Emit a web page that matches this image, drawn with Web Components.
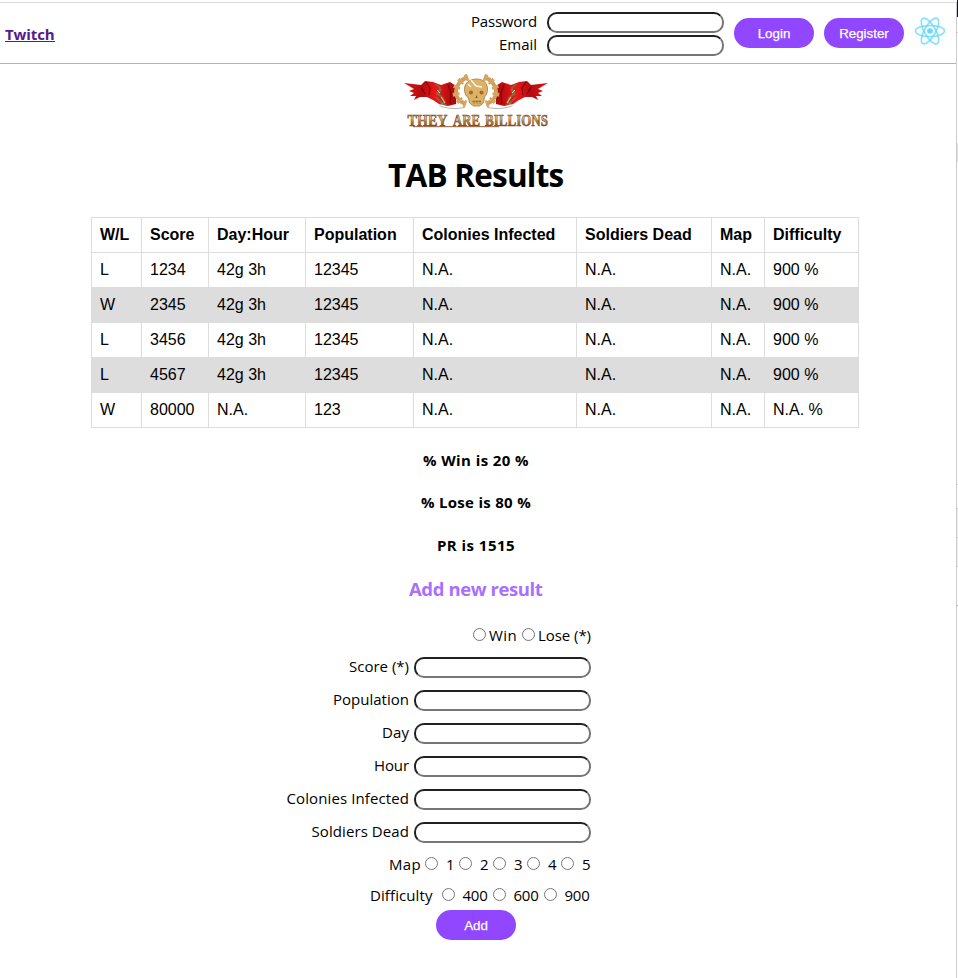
<!DOCTYPE html>
<html lang="en">
<head>
<meta charset="utf-8">
<title>TAB Results</title>
<style>
  html, body { margin: 0; height: 978px; overflow: hidden; background: #fff; }
  body { font-family: "Open Sans", "Noto Sans", sans-serif; font-size: 15px; color: #000; }
</style>
</head>
<body>
<tab-app></tab-app>
<script>
/* Base class: renders the static markup of each element into an open shadow root. */
class Base extends HTMLElement {
  connectedCallback() {
    if (this.shadowRoot) return;
    const t = document.createElement('template');
    t.innerHTML = this.view();
    this.attachShadow({ mode: 'open' }).append(t.content.cloneNode(true));
    this.ready();
  }
  ready() {}
}

/* Text spaced evenly to a given width. */
customElements.define('fit-text', class extends Base {
  view() {
    return `<style>:host{display:inline-block;white-space:pre;flex:none;line-height:20px}span{display:inline-block}</style><span>${this.getAttribute('text')}</span>`;
  }
  ready() {
    const s = this.shadowRoot.querySelector('span'), w = +this.getAttribute('width');
    const n = this.getAttribute('text').length;
    this.style.width = w + 'px';
    s.style.letterSpacing = ((w - s.getBoundingClientRect().width) / n) + 'px';
  }
});

customElements.define('round-input', class extends Base {
  view() {
    return `<style>:host{display:block;flex:none;width:177px;height:21px}
    input{display:block;box-sizing:border-box;width:177px;height:21px;margin:0;padding:1px 2px;border:2px solid;border-color:#212121 #767676 #767676 #212121;border-radius:10px;background:#fff;outline:0}</style><input type="text">`;
  }
});

customElements.define('pill-button', class extends Base {
  view() {
    return `<style>:host{display:block;flex:none}
    button{display:block;width:80px;height:30px;border:0;border-radius:15px;padding:0;background:#9147ff;color:#fff;font:13.333px "Liberation Sans",Arial,sans-serif;-webkit-text-stroke:.25px #fff}</style><button><slot></slot></button>`;
  }
});

customElements.define('radio-option', class extends Base {
  view() {
    return `<style>:host{display:flex;flex:none;align-items:center;gap:var(--gap,7px)}
    input{width:13px;height:13px;margin:0;flex:none;transform:translateY(-1px)}</style>
    <input type="radio"><fit-text text="${this.getAttribute('text')}" width="${this.getAttribute('width')}"></fit-text>`;
  }
});

customElements.define('react-mark', class extends Base {
  view() {
    return `<style>:host{display:block;width:32px;height:30px;flex:none}svg{display:block}</style>
    <svg width="32" height="30" viewBox="-16 -15 32 30" fill="none" stroke="#61dafb" stroke-opacity=".8" stroke-width="1.6">
      <ellipse rx="14.5" ry="5.5"/><ellipse rx="14.5" ry="5.5" transform="rotate(60)"/><ellipse rx="14.5" ry="5.5" transform="rotate(120)"/>
      <circle r="2.8" fill="#61dafb" stroke="none"/></svg>`;
  }
});

customElements.define('app-header', class extends Base {
  view() {
    return `<style>
    :host{display:flex;box-sizing:border-box;height:62px;margin-top:2px;border-top:1px solid #dadada;border-bottom:1px solid #0ff;padding:0 10px 0 5px;align-items:flex-start}
    a{color:#551a8b;font-weight:700;text-decoration:none;margin-top:21px;border-bottom:1px solid #551a8b;height:17px;line-height:20px}
    a fit-text{display:block}
    .fields{margin-left:auto;display:grid;gap:2px;margin-top:9px}
    .f{display:flex;justify-content:flex-end;gap:10px;height:21px}
    .f fit-text{margin-top:-1px}
    pill-button{margin:15px 0 0 10px}
    react-mark{margin:13px 0 0 10px}
    </style>
    <a><fit-text text="Twitch" width="49.5"></fit-text></a>
    <div class="fields">
      <div class="f"><fit-text text="Password" width="66"></fit-text><round-input></round-input></div>
      <div class="f"><fit-text text="Email" width="38"></fit-text><round-input></round-input></div>
    </div>
    <pill-button>Login</pill-button><pill-button>Register</pill-button><react-mark></react-mark>`;
  }
});

customElements.define('game-logo', class extends Base {
  view() {
    return `<style>:host{display:block;width:150px;height:60px}svg{display:block;overflow:visible}</style>
    <svg width="150" height="60" viewBox="402 70 150 60">
      <defs>
        <linearGradient id="g" x1="0" y1="0" x2="0" y2="1"><stop offset="0" stop-color="#8f6a3b"/><stop offset=".4" stop-color="#e6c48a"/><stop offset=".58" stop-color="#b98444"/><stop offset="1" stop-color="#6c3218"/></linearGradient>
        <linearGradient id="r" x1="0" y1="0" x2="1" y2="0"><stop offset="0" stop-color="#d91c1c"/><stop offset=".35" stop-color="#b50a0e"/><stop offset=".6" stop-color="#ea1818"/><stop offset="1" stop-color="#a8080c"/></linearGradient>
        <g id="flag">
          <path d="M404 83l9 1 8 1 4-4 8 1 8 3 9-3 6 4 0 18-8 2-9-2-6-4-6-3-7 0-6 3 2-4-6 0 4-3-5-2 5-2z" fill="url(#r)"/>
          <path d="M426 82l4 6-1 7M448 85l3 8-1 11M421 87l4 7" stroke="#74050a" stroke-width="1.1" fill="none"/>
          <path d="M436 84l4 4-3 6 5 3 3 6M441 89l-2 5 5 5M436 97l5 5 5 3" stroke="#91633e" stroke-width="1.7" fill="none"/>
          <path d="M437 90l3 3M441 97l4 6" stroke="#f1cf9e" fill="none"/>
          <path d="M465 107c-5 2-15 2-22 0-5-1-4-3 0-3" stroke="#b5b0aa" stroke-width="1" fill="none"/>
        </g>
      </defs>
      <use href="#flag"/><use href="#flag" transform="translate(952 0) scale(-1 1)"/>
      <path d="M468 77c-14 5-17 22-2 27M484 77c14 5 17 22 2 27" fill="none" stroke="#d0a05a" stroke-width="4"/>
      <path d="M468 77c-14 5-17 22-2 27M484 77c14 5 17 22 2 27" fill="none" stroke="#d5a763" stroke-width="7" stroke-dasharray="3 4"/>
      <path d="M476.500 79c7 0 11 4 11 10 0 4-1 6-3 8l-1 6-4 3h-6l-4-3-1-5c-3-2-4-5-4-9 0-6 5-10 12-10z" fill="#dcb268" stroke="#a8793c" stroke-width=".8"/>
      <path d="M471 80l5 6 6 1M468 84l3 3" stroke="#fff6e2" stroke-width="1.5" fill="none"/>
      <circle cx="471" cy="92.500" r="2" fill="#a36a2c"/><circle cx="481.500" cy="92.500" r="2" fill="#a36a2c"/>
      <path d="M475.500 98l1-3 1 3z" fill="#7b4c20"/><path d="M472 101.500h9M474 100v4M477 100v4M480 100v4" stroke="#94642f" stroke-width=".7"/>
      <path d="M413 126.700H499" stroke="#9d5a30"/>
      <g font-family="Liberation Serif" font-weight="700" font-size="16" fill="url(#g)" stroke="#7b4a22" stroke-width=".6">
        <text x="407.500" y="125.500" textLength="40" lengthAdjust="spacingAndGlyphs">THEY</text>
        <text x="453" y="125.500" textLength="27" lengthAdjust="spacingAndGlyphs">ARE</text>
        <text x="485" y="125.500" textLength="63" lengthAdjust="spacingAndGlyphs">BILLIONS</text>
      </g>
    </svg>`;
  }
});

customElements.define('result-table', class extends Base {
  view() {
    const widths = [50, 67, 97, 108, 163, 135, 53, 94];
    const head = ['W/L', 'Score', 'Day:Hour', 'Population', 'Colonies Infected', 'Soldiers Dead', 'Map', 'Difficulty'];
    const rows = [['L', '1234'], ['W', '2345'], ['L', '3456'], ['L', '4567']]
      .map(r => [...r, '42g 3h', '12345', 'N.A.', 'N.A.', 'N.A.', '900 %']);
    rows.push(['W', '80000', 'N.A.', '123', 'N.A.', 'N.A.', 'N.A.', 'N.A. %']);
    return `<style>:host{display:block;width:768px}
    table{border-collapse:collapse;table-layout:fixed;width:768px;font:16px "Liberation Sans",Arial,sans-serif}
    th,td{box-sizing:border-box;border:1px solid #ddd;height:35px;padding:0 0 0 8px;text-align:left;white-space:nowrap;line-height:18px}
    tbody tr:nth-child(even){background:#ddd}</style>
    <table><colgroup>${widths.map(w => `<col style="width:${w}px">`).join('')}</colgroup>
    <thead><tr>${head.map(h => `<th>${h}</th>`).join('')}</tr></thead>
    <tbody>${rows.map(r => `<tr>${r.map(c => `<td>${c}</td>`).join('')}</tr>`).join('')}</tbody></table>`;
  }
});

customElements.define('result-form', class extends Base {
  view() {
    const opts = (list, w) => list.map(t => `<radio-option text="${t}" width="${w}"></radio-option>`).join('');
    const fields = [['Score (*)', 60], ['Population', 76], ['Day', 27], ['Hour', 35], ['Colonies Infected', 122.5], ['Soldiers Dead', 97.5]];
    return `<style>:host{display:block;width:591px}
    .r{display:flex;justify-content:flex-end;gap:5px;height:21px;align-items:center}
    .field{margin-bottom:12px}
    .field fit-text{margin-top:-3px}
    .win{--gap:3px;height:20px;margin-bottom:12px}
    .map{height:20px;margin:-1px 0 11px;padding-right:1px}
    .map,.diff{--gap:8px}
    .map>fit-text{margin-right:-1px}
    .diff{height:20px;padding-right:1.5px}.diff>fit-text{margin-right:4px}</style>
    <div class="r win"><radio-option text="Win" width="28"></radio-option><radio-option text="Lose (*)" width="53"></radio-option></div>
    ${fields.map(([t, w]) => `<div class="r field"><fit-text text="${t}" width="${w}"></fit-text><round-input></round-input></div>`).join('')}
    <div class="r map"><fit-text text="Map" width="32"></fit-text>${opts([1, 2, 3, 4, 5], 8)}</div>
    <div class="r diff"><fit-text text="Difficulty" width="62.5"></fit-text>${opts([400, 600, 900], 25)}</div>`;
  }
});

/* One-pixel sliver of the neighbouring panel at the window's right edge. */
customElements.define('edge-strip', class extends Base {
  view() {
    return `<style>:host{display:block;width:1px;height:978px;background:
      linear-gradient(#15151f,#15151f) 0 0/1px 17px no-repeat,
      linear-gradient(#ccc,#ccc) 0 32px/1px 1px no-repeat,
      linear-gradient(#ddd,#ddd) 0 143px/1px 19px no-repeat,
      linear-gradient(#ccc,#ccc) 0 484px/1px 1px no-repeat,
      linear-gradient(#ccc,#ccc) 0 508px/1px 1px no-repeat,
      linear-gradient(#ccc,#ccc) 0 537px/1px 1px no-repeat,
      linear-gradient(#ccc,#ccc) 0 566px/1px 1px no-repeat,
      linear-gradient(#aaa,#aaa) 0 605px/1px 1px no-repeat,
      linear-gradient(#eee,#eee) 0 508px/1px 58px no-repeat,#fff}</style>`;
  }
});

customElements.define('tab-app', class extends Base {
  view() {
    return `<style>
    :host{display:flex;width:958px;height:978px}
    main{width:956px;display:flex;flex-direction:column}
    .edge{width:1px;background:#ccc;margin-top:2px}
    game-logo{margin:6px 0 0 402px}
    h1,h3,h4{margin:0;display:flex;font-weight:700}
    h1{font-size:31.5px;height:40px;margin:25px 0 0 388px;align-items:center}
    h1 fit-text{line-height:40px}
    result-table{margin:22px 0 0 91px}
    h4{font-size:15px;height:20px;margin-bottom:22px}
    h4.a{margin-top:22px}
    h4.c{margin:1px 0 20px}
    h3{color:#a970ff;font-size:18.5px;height:24px;margin:2px 0 24px 409px;align-items:center}
    pill-button{margin:5px 0 0 436px}
    </style>
    <main>
      <app-header></app-header>
      <game-logo></game-logo>
      <h1><fit-text text="TAB Results" width="175.5"></fit-text></h1>
      <result-table></result-table>
      <h4 class="a" style="padding-left:423px"><fit-text text="% Win is 20 %" width="106"></fit-text></h4>
      <h4 style="padding-left:421px"><fit-text text="% Lose is 80 %" width="110"></fit-text></h4>
      <h4 class="c" style="padding-left:437px"><fit-text text="PR is 1515" width="78"></fit-text></h4>
      <h3><fit-text text="Add new result" width="133.5"></fit-text></h3>
      <result-form></result-form>
      <pill-button>Add</pill-button>
    </main>
    <div class="edge"></div><edge-strip></edge-strip>`;
  }
});
</script>
</body>
</html>
